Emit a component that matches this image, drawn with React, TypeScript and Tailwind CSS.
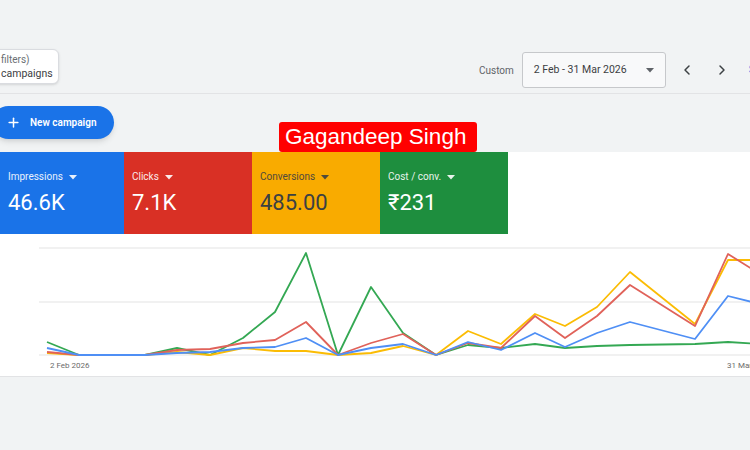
import { ChevronLeft, ChevronRight, Plus } from "lucide-react";

type Metric = {
  label: string;
  value: string;
  bg: string;
  text: string;
  width: string;
};

const metrics: Metric[] = [
  { label: "Impressions", value: "46.6K", bg: "bg-[#1a73e8]", text: "text-white", width: "w-[124px]" },
  { label: "Clicks", value: "7.1K", bg: "bg-[#d93025]", text: "text-white", width: "w-[128px]" },
  { label: "Conversions", value: "485.00", bg: "bg-[#f9ab00]", text: "text-[#3c4043]", width: "w-[128px]" },
  { label: "Cost / conv.", value: "₹231", bg: "bg-[#1e8e3e]", text: "text-white", width: "w-[128px]" },
];

const xs = [47, 79, 112, 145, 177, 210, 243, 275, 306, 338, 371, 403, 436, 468, 501, 535, 565, 597, 630, 695, 728, 760];

const series = [
  {
    color: "#34a853",
    ys: [342, 355, 355, 355, 348, 355, 338, 312, 253, 355, 287, 333, 355, 345, 348, 344, 348, 346, 345, 344, 342, 344],
  },
  {
    color: "#fbbc04",
    ys: [353, 355, 355, 355, 352, 355, 348, 351, 351, 355, 353, 346, 355, 331, 344, 314, 326, 307, 272, 324, 260, 260],
  },
  {
    color: "#e0625a",
    ys: [352, 355, 355, 355, 350, 349, 343, 340, 322, 355, 343, 334, 355, 343, 348, 316, 338, 316, 285, 326, 254, 274],
  },
  {
    color: "#4f8ff5",
    ys: [348, 355, 355, 355, 353, 352, 348, 347, 338, 355, 348, 344, 355, 342, 350, 333, 347, 333, 322, 339, 296, 304],
  },
];

const Caret = ({ className }: { className: string }) => (
  <svg width="8" height="5" viewBox="0 0 8 5" className={className}>
    <path d="M0 0h8L4 4.5z" fill="currentColor" />
  </svg>
);

const Chart = () => (
  <svg width="750" height="143" viewBox="0 234 750 143" className="block">
    {[248, 302, 355].map((y) => (
      <line key={y} x1="39" x2="750" y1={y} y2={y} stroke="#ececec" strokeWidth="1.5" />
    ))}
    {series.map((s) => (
      <polyline
        key={s.color}
        points={xs.map((x, i) => `${x},${s.ys[i]}`).join(" ")}
        fill="none"
        stroke={s.color}
        strokeWidth="1.8"
        strokeLinejoin="round"
      />
    ))}
    <text x="50" y="368" fontSize="8" fill="#6b6b6b" fontFamily="Roboto, sans-serif">
      2 Feb 2026
    </text>
    <text x="727" y="368" fontSize="8" fill="#6b6b6b" fontFamily="Roboto, sans-serif">
      31 Mar 2026
    </text>
  </svg>
);

export default function App() {
  return (
    <div className="w-[750px] h-[450px] overflow-hidden bg-[#f1f3f4] font-['Roboto',sans-serif]">
      {/* toolbar */}
      <div className="h-[94px] flex items-start border-b border-[#e2e3e5] overflow-hidden">
        <div className="mt-[49px] -ml-[8px] w-[67px] h-[35px] shrink-0 rounded-md border border-[#dadce0] bg-white pl-[8px] pt-[3px] leading-[14px] shadow-sm">
          <div className="text-[10px] text-[#6b6f73]">filters)</div>
          <div className="text-[10.5px] text-[#3c4043]">campaigns</div>
        </div>
        <div className="ml-[420px] mt-[52px] flex items-center shrink-0">
          <span className="text-[10px] text-[#5f6368]">Custom</span>
          <div className="ml-[8px] w-[144px] h-[36px] flex items-center justify-between rounded-[3px] border border-[#c6c8cb] bg-[#f8f9fa] pl-[11px] pr-[11px]">
            <span className="text-[10.5px] text-[#3c4043]">2 Feb - 31 Mar 2026</span>
            <Caret className="text-[#5f6368]" />
          </div>
          <ChevronLeft className="ml-[13px] text-[#3c4043]" size={16} strokeWidth={2.2} />
          <ChevronRight className="ml-[19px] text-[#3c4043]" size={16} strokeWidth={2.2} />
          <span className="ml-[19px] text-[11px] text-[#1a73e8]">Segment</span>
        </div>
      </div>

      {/* actions row */}
      <div className="h-[58px] flex items-start">
        <button className="mt-[12px] -ml-[8px] w-[122px] h-[33px] shrink-0 flex items-center rounded-full bg-[#1a73e8] pl-[14px] text-white shadow-md">
          <Plus size={15} strokeWidth={2.4} />
          <span className="ml-[9px] text-[10px] font-semibold">New campaign</span>
        </button>
        <div className="mt-[28px] ml-[165px] w-[198px] h-[30px] flex items-center rounded-[3px] bg-[#ff0000] pl-[6px] font-['Liberation_Sans',Arial,sans-serif] text-[22.5px] leading-none text-white">
          Gagandeep Singh
        </div>
      </div>

      {/* scorecards + chart */}
      <div className="h-[225px] bg-white border-b border-[#e2e3e5]">
        <div className="flex h-[82px]">
          {metrics.map((m) => (
            <div key={m.label} className={`${m.width} ${m.bg} ${m.text} h-full pl-[8px] pt-[18px]`}>
              <div className="flex items-center gap-[6px] text-[10px] leading-[13px] opacity-90">
                <span>{m.label}</span>
                <Caret className="mt-[1px]" />
              </div>
              <div className="mt-[7px] text-[22px] leading-[26px]">{m.value}</div>
            </div>
          ))}
        </div>
        <Chart />
      </div>
    </div>
  );
}
